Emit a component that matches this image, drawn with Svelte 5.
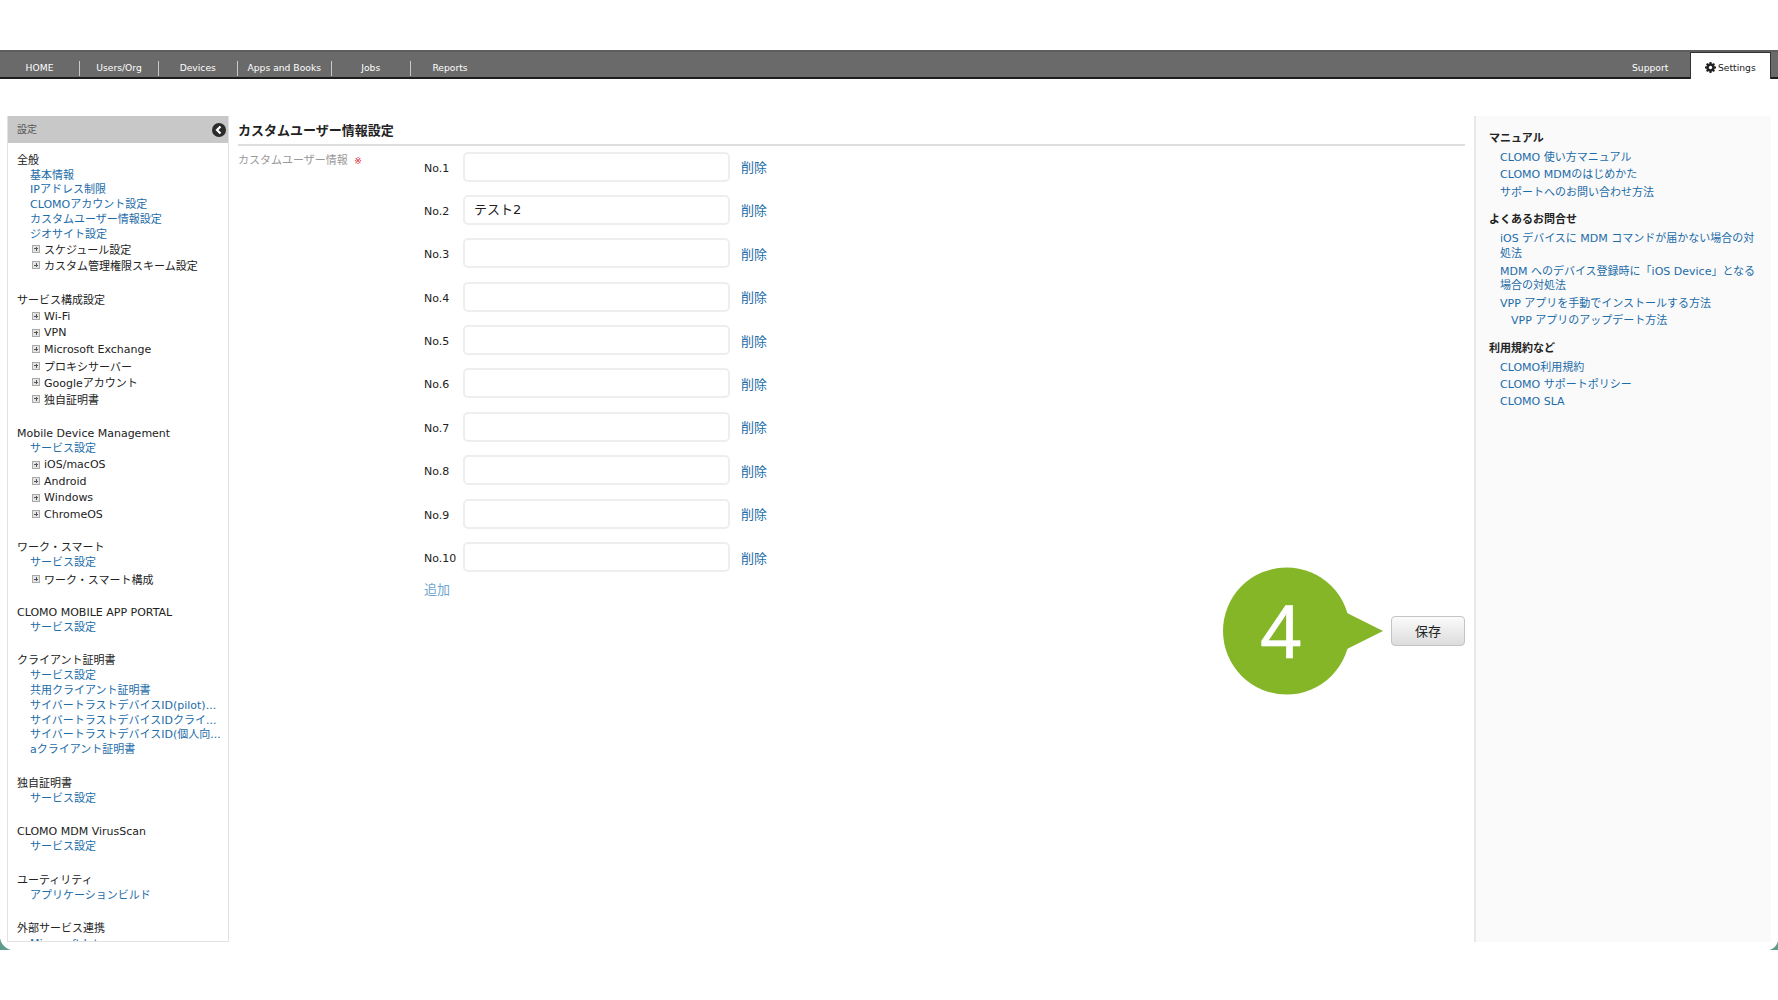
<script>
  const navLeft = [
    { label: 'HOME', w: 80 },
    { label: 'Users/Org', w: 79 },
    { label: 'Devices', w: 78.5 },
    { label: 'Apps and Books', w: 94.5 },
    { label: 'Jobs', w: 78.5 },
    { label: 'Reports', w: 79 }
  ];

  // type: title / link / tree
  const sideGroups = [
    [['title', '全般'], ['link', '基本情報'], ['link', 'IPアドレス制限'], ['link', 'CLOMOアカウント設定'], ['link', 'カスタムユーザー情報設定'], ['link', 'ジオサイト設定'], ['tree', 'スケジュール設定'], ['tree', 'カスタム管理権限スキーム設定']],
    [['title', 'サービス構成設定'], ['tree', 'Wi-Fi'], ['tree', 'VPN'], ['tree', 'Microsoft Exchange'], ['tree', 'プロキシサーバー'], ['tree', 'Googleアカウント'], ['tree', '独自証明書']],
    [['title', 'Mobile Device Management'], ['link', 'サービス設定'], ['tree', 'iOS/macOS'], ['tree', 'Android'], ['tree', 'Windows'], ['tree', 'ChromeOS']],
    [['title', 'ワーク・スマート'], ['link', 'サービス設定'], ['tree', 'ワーク・スマート構成']],
    [['title', 'CLOMO MOBILE APP PORTAL'], ['link', 'サービス設定']],
    [['title', 'クライアント証明書'], ['link', 'サービス設定'], ['link', '共用クライアント証明書'], ['link', 'サイバートラストデバイスID(pilot)...'], ['link', 'サイバートラストデバイスIDクライ...'], ['link', 'サイバートラストデバイスID(個人向...'], ['link', 'aクライアント証明書']],
    [['title', '独自証明書'], ['link', 'サービス設定']],
    [['title', 'CLOMO MDM VirusScan'], ['link', 'サービス設定']],
    [['title', 'ユーティリティ'], ['link', 'アプリケーションビルド']],
    [['title', '外部サービス連携'], ['link', 'Microsoft Intune']]
  ];

  const rows = ['', 'テスト2', '', '', '', '', '', '', '', ''];

  const help = [
    { title: 'マニュアル', links: [['CLOMO 使い方マニュアル'], ['CLOMO MDMのはじめかた'], ['サポートへのお問い合わせ方法']] },
    { title: 'よくあるお問合せ', links: [['iOS デバイスに MDM コマンドが届かない場合の対処法'], ['MDM へのデバイス登録時に「iOS Device」となる場合の対処法'], ['VPP アプリを手動でインストールする方法'], ['VPP アプリのアップデート方法', true]] },
    { title: '利用規約など', links: [['CLOMO利用規約'], ['CLOMO サポートポリシー'], ['CLOMO SLA']] }
  ];
</script>

<div class="page">
  <nav class="navbar">
    {#each navLeft as item, i}
      <a class="nav-item" class:sep={i < navLeft.length - 1} style="width: {item.w}px">{item.label}</a>
    {/each}
    <a class="nav-item support">Support</a>
    <div class="settings-tab">
      <svg width="11" height="11" viewBox="0 0 12 12">
        <circle cx="6" cy="6" r="4.700" fill="#222"/>
        <g stroke="#222" stroke-width="2.200">
          <path d="M6 0v12M0 6h12M1.800 1.800l8.400 8.400M10.200 1.800l-8.400 8.400"/>
        </g>
        <circle cx="6" cy="6" r="1.800" fill="#fff"/>
      </svg>
      Settings
    </div>
  </nav>

  <div class="columns">
    <aside class="sidebar">
      <div class="side-head">
        <span>設定</span>
        <svg class="collapse" width="14" height="14" viewBox="0 0 14 14">
          <circle cx="7" cy="7" r="7" fill="#2b2b2b"/>
          <path d="M8.500 3.500 5 7l3.500 3.500" fill="none" stroke="#fff" stroke-width="2.200"/>
        </svg>
      </div>
      <div class="side-body">
        {#each sideGroups as group}
          <div class="side-group">
            {#each group as [type, text]}
              {#if type === 'title'}
                <div class="side-title">{text}</div>
              {:else if type === 'link'}
                <a class="side-link">{text}</a>
              {:else}
                <div class="side-tree"><span class="plus"></span>{text}</div>
              {/if}
            {/each}
          </div>
        {/each}
      </div>
    </aside>

    <main class="content">
      <h2>カスタムユーザー情報設定</h2>
      <div class="form">
        <div class="field-label">カスタムユーザー情報 <span class="req">※</span></div>
        <div class="rows">
          {#each rows as value, i}
            <div class="row">
              <span class="no">No.{i + 1}</span>
              <div class="input">{value}</div>
              <a class="del">削除</a>
            </div>
          {/each}
          <a class="add">追加</a>
        </div>
      </div>
      <div class="actions">
        <button class="save">保存</button>
      </div>
      <div class="bubble">
        <svg width="160" height="128" viewBox="0 0 160 128">
          <path d="M124 46 160 64 124 82Z" fill="#84b628"/>
          <circle cx="63.500" cy="64" r="63.500" fill="#84b628"/>
        </svg>
        <span class="bubble-num">4</span>
      </div>
    </main>

    <aside class="help">
      {#each help as section}
        <h3>{section.title}</h3>
        {#each section.links as [text, sub]}
          <a class="help-link" class:sub>{text}</a>
        {/each}
      {/each}
    </aside>
  </div>

  <svg class="corner left" width="11" height="12" viewBox="0 0 11 12"><path d="M0 0C1 6 5 10 11 12H0Z" fill="#5f9c8c"/></svg>
  <svg class="corner right" width="9" height="9" viewBox="0 0 9 9"><path d="M9 0C8 4 5 8 0 9H9Z" fill="#5f9c8c"/></svg>
</div>

<style>
  :global(body) {
    margin: 0;
    background: #fff;
  }

  .page {
    position: relative;
    width: 1778px;
    height: 1000px;
    overflow: hidden;
    background: #fff;
    padding-top: 50px;
    box-sizing: border-box;
    font-family: "DejaVu Sans", "Noto Sans CJK JP", sans-serif;
    font-size: 10px;
    color: #222;
  }

  .navbar {
    display: flex;
    align-items: flex-end;
    height: 29px;
    box-sizing: border-box;
    background: #6a6a6a;
    border-top: 2px solid #5e5e5e;
    border-bottom: 2px solid #1c1c1c;
  }

  .nav-item {
    display: block;
    box-sizing: border-box;
    height: 15px;
    line-height: 13px;
    margin-bottom: 1px;
    text-align: center;
    color: #fff;
    font-size: 9.200px;
  }

  .nav-item.sep {
    border-right: 1px solid #c9c9c9;
  }

  .support {
    margin-left: auto;
    margin-right: 22px;
    width: 36px;
    white-space: nowrap;
  }

  .settings-tab {
    display: flex;
    align-items: center;
    gap: 2px;
    box-sizing: border-box;
    width: 81px;
    height: 27px;
    margin: 0 7px -2px 0;
    padding: 3px 0 0 14px;
    background: #fff;
    border: 1px solid #333;
    border-bottom: none;
    font-size: 9.200px;
    color: #222;
  }

  .columns {
    display: flex;
    height: 826px;
    margin: 37px 7px 0;
  }

  .sidebar {
    width: 222px;
    flex: none;
    box-sizing: border-box;
    border: 1px solid #e2e2e2;
    border-top: none;
    overflow: hidden;
  }

  .side-head {
    display: flex;
    align-items: center;
    justify-content: space-between;
    height: 27px;
    padding: 0 2px 3px 9px;
    box-sizing: border-box;
    background: #c8c8c8;
    color: #555;
    font-size: 10px;
  }

  .side-head .collapse {
    margin-top: 3px;
  }

  .side-body {
    padding: 9.500px 0 0 9px;
    font-size: 11px;
  }

  .side-group {
    margin-bottom: 17.700px;
  }

  /* the first two groups sit a touch tighter above their tree rows */
  .side-group:first-child {
    margin-bottom: 19.700px;
  }

  .side-group:first-child .side-link + .side-tree {
    margin-top: -2px;
  }

  .side-group:nth-child(2) {
    margin-bottom: 18.700px;
  }

  .side-group:nth-child(2) .side-title + .side-tree {
    margin-top: -1px;
  }

  .side-title {
    line-height: 16px;
    color: #222;
    white-space: nowrap;
  }

  .side-link {
    display: block;
    padding-left: 13px;
    line-height: 14.750px;
    color: #1c6ca8;
    white-space: nowrap;
  }

  .side-tree {
    display: flex;
    align-items: center;
    height: 16.500px;
    padding-left: 15px;
    white-space: nowrap;
  }

  .plus {
    position: relative;
    width: 6px;
    height: 6px;
    margin-right: 4px;
    border: 1px solid #aaa;
    background: #e4e4e4;
  }

  .plus::before,
  .plus::after {
    content: "";
    position: absolute;
    background: #555;
  }

  .plus::before {
    left: 1px;
    top: 2.500px;
    width: 4px;
    height: 1px;
  }

  .plus::after {
    left: 2.500px;
    top: 1px;
    width: 1px;
    height: 4px;
  }

  .content {
    position: relative;
    flex: 1;
    margin: 0 9px;
    min-width: 0;
  }

  h2 {
    margin: 0;
    height: 30px;
    line-height: 29px;
    box-sizing: border-box;
    border-bottom: 2px solid #ddd;
    font-size: 13px;
    font-weight: bold;
    color: #222;
  }

  .form {
    display: flex;
    padding-top: 5.500px;
  }

  .field-label {
    width: 186px;
    flex: none;
    padding-top: 1px;
    line-height: 16px;
    font-size: 11px;
    color: #999;
  }

  .req {
    margin-left: 3px;
    color: #e0202c;
    font-size: 9px;
  }

  .rows {
    display: flex;
    flex-direction: column;
    gap: 13.400px;
  }

  .row {
    display: flex;
    align-items: center;
    height: 30px;
  }

  .no {
    width: 39px;
    padding-top: 3px;
    font-size: 11px;
    color: #222;
  }

  .input {
    box-sizing: border-box;
    width: 267px;
    height: 30px;
    padding: 0 9px;
    line-height: 25px;
    border: 2px solid #eee;
    border-radius: 5px;
    font-size: 13px;
    color: #222;
  }

  .del {
    margin-left: 11px;
    font-size: 13px;
    color: #1c6ca8;
  }

  .add {
    margin-top: -6.500px;
    font-size: 13px;
    color: #6ea6d0;
  }

  .actions {
    display: flex;
    justify-content: flex-end;
    margin-top: 18px;
  }

  .save {
    width: 74px;
    height: 30px;
    padding: 0;
    border: 1px solid #c4c4c4;
    border-radius: 4px;
    background: linear-gradient(#fbfbfb, #dcdcdc);
    font-family: inherit;
    font-size: 13px;
    color: #222;
  }

  .bubble {
    position: absolute;
    left: 985px;
    top: 451px;
    width: 160px;
    height: 128px;
  }

  .bubble svg {
    display: block;
  }

  .bubble-num {
    position: absolute;
    left: 37px;
    top: 23px;
    font-family: "Liberation Sans", sans-serif;
    font-size: 76px;
    line-height: 84px;
    color: #fff;
    -webkit-text-stroke: 0.500px #fff;
  }

  .help {
    flex: 0 0 297px;
    box-sizing: border-box;
    padding: 15px 12px 0 13px;
    background: #fafafa;
    border-left: 2px solid #e8e8e8;
    font-size: 11px;
  }

  h3 {
    margin: 0 0 5px;
    line-height: 15px;
    font-size: 11px;
    font-weight: bold;
    color: #222;
  }

  h3:not(:first-child) {
    margin-top: 12px;
  }

  .help-link {
    display: block;
    margin: 0 0 2.600px 11px;
    line-height: 14.750px;
    color: #1c6ca8;
  }

  .help-link.sub {
    margin-left: 22px;
  }

  .corner {
    position: absolute;
  }

  .corner.left {
    left: 0;
    top: 938px;
  }

  .corner.right {
    right: 0;
    top: 941px;
  }
</style>
